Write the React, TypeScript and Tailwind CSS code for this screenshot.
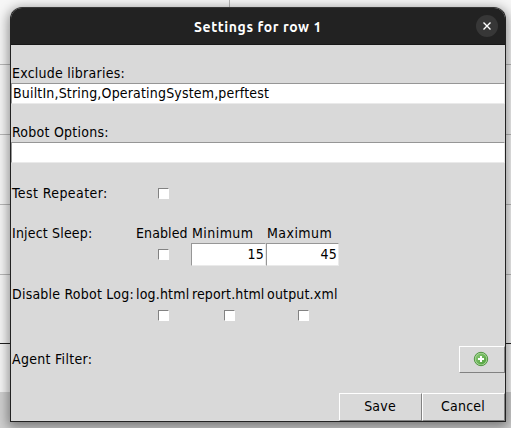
import type { ReactNode } from "react";

function Entry({ value = "", className = "" }: { value?: string; className?: string }) {
  return (
    <div className={`box-border whitespace-nowrap border border-t-[#969696] border-l-[#969696] border-r-[#eaeaea] border-b-[#eaeaea] bg-white px-px ${className}`}>
      {value}
    </div>
  );
}

function Check({ className = "" }: { className?: string }) {
  return <div className={`size-[11px] border border-t-[#828282] border-l-[#828282] border-r-white border-b-white bg-white ${className}`} />;
}

function Button({ children, className = "" }: { children: ReactNode; className?: string }) {
  return (
    <button className={`flex items-center justify-center border border-t-white border-l-white border-r-[#828282] border-b-[#828282] bg-[#d9d9d9] pb-0.5 ${className}`}>
      {children}
    </button>
  );
}

function Label({ children, className = "" }: { children: ReactNode; className?: string }) {
  return <div className={`h-5 whitespace-nowrap pl-px leading-5 ${className}`}>{children}</div>;
}

export default function App() {
  return (
    <div className="relative h-[428px] w-[511px] overflow-hidden bg-[#f6f6f6] text-[14px] tracking-[0.18px] text-black [font-family:'DejaVu_Sans_Condensed','DejaVu_Sans',sans-serif] [font-stretch:condensed]">
      <div className="absolute inset-0 flex flex-col">
        <div className="flex h-[65px] shrink-0 border-b border-[#b8b8b8]">
          <div className="w-[230px] border-r border-[#b8b8b8]" />
        </div>
        <div className="h-[70px] shrink-0 border-b border-[#b8b8b8]" />
        <div className="h-[70px] shrink-0 border-b border-[#b8b8b8]" />
        <div className="h-[70px] shrink-0 border-b border-[#b8b8b8]" />
        <div className="h-[69px] shrink-0 border-b border-[#202020]" />
        <div className="h-12 shrink-0" />
        <div className="grow bg-[#d0d0d0]" />
      </div>
      <div className="absolute top-[7px] left-[10px] flex h-[415px] w-[496px] flex-col overflow-hidden rounded-t-[12px] border border-[#222222] border-t-[#373737] bg-[#d9d9d9] shadow-[0_3px_12px_2px_rgba(0,0,0,0.42)]">
        <header className="flex h-[37px] shrink-0 items-center justify-between border-b border-[#171717] bg-[#222222] pr-[7px] pl-[29px] text-white">
          <h1 className="mt-0.5 grow text-center text-[14px] font-bold leading-5 tracking-[0.58px] [font-family:Ubuntu,'Noto_Sans',sans-serif] [font-stretch:normal]">Settings for row 1</h1>
          <button aria-label="Close" className="flex size-[22px] items-center justify-center rounded-full bg-[#373737]">
            <svg width="8" height="8" viewBox="0 0 8 8" stroke="white" strokeWidth="1.4"><path d="M.5.5l7 7M7.5.5l-7 7" /></svg>
          </button>
        </header>
        <section className="mt-[18px]">
          <Label className="tracking-[0.25px]">Exclude libraries:</Label>
          <Entry value="BuiltIn,String,OperatingSystem,perftest" className="h-[21px] leading-[18px]" />
        </section>
        <section className="mt-[18px]">
          <Label className="tracking-[0.25px]">Robot Options:</Label>
          <Entry className="h-[21px]" />
        </section>
        <section className="mt-5 grid grid-cols-[124px_1fr] items-center">
          <Label className="tracking-[0.43px]">Test Repeater:</Label>
          <Check className="ml-[23px]" />
        </section>
        <section className="mt-5 grid grid-cols-[124px_56px_75px_73px]">
          <Label>Inject Sleep:</Label><Label className="tracking-[0.1px]">Enabled</Label><Label className="tracking-[0.45px]">Minimum</Label><Label className="tracking-[0.45px]">Maximum</Label>
          <div /><Check className="mt-1.5 ml-[23px]" />
          <Entry value="15" className="h-[23px] text-right leading-5" />
          <Entry value="45" className="h-[23px] text-right leading-5" />
        </section>
        <section className="mt-[18px] grid grid-cols-[124px_56px_75px_73px]">
          <Label className="tracking-[0.22px]">Disable Robot Log:</Label><Label>log.html</Label><Label className="tracking-[0.12px]">report.html</Label><Label>output.xml</Label>
          <div /><Check className="mt-1.5 ml-[23px]" /><Check className="mt-1.5 ml-[33px]" /><Check className="mt-1.5 ml-8" />
        </section>
        <section className="mt-[25px] flex h-[27px] items-start justify-between">
          <Label className="mt-[3px] tracking-[0.3px]">Agent Filter:</Label>
          <Button className="h-[27px] w-[46px] pr-0.5">
            <svg width="16" height="16" viewBox="0 0 16 16">
              <defs><linearGradient id="add" x2="1" y2="1"><stop stopColor="#8cc978" /><stop offset="1" stopColor="#4c9f39" /></linearGradient></defs>
              <circle cx="8" cy="8" r="6.7" fill="#a9d799" stroke="#458d36" strokeWidth=".9" />
              <circle cx="8" cy="8" r="5.4" fill="url(#add)" />
              <path d="M8 5v6M5 8h6" stroke="white" strokeWidth="2" />
            </svg>
          </Button>
        </section>
        <footer className="mt-5 flex justify-end">
          <Button className="h-7 w-[83px] pr-px">Save</Button>
          <Button className="h-7 w-[83px] pr-px">Cancel</Button>
        </footer>
      </div>
    </div>
  );
}
